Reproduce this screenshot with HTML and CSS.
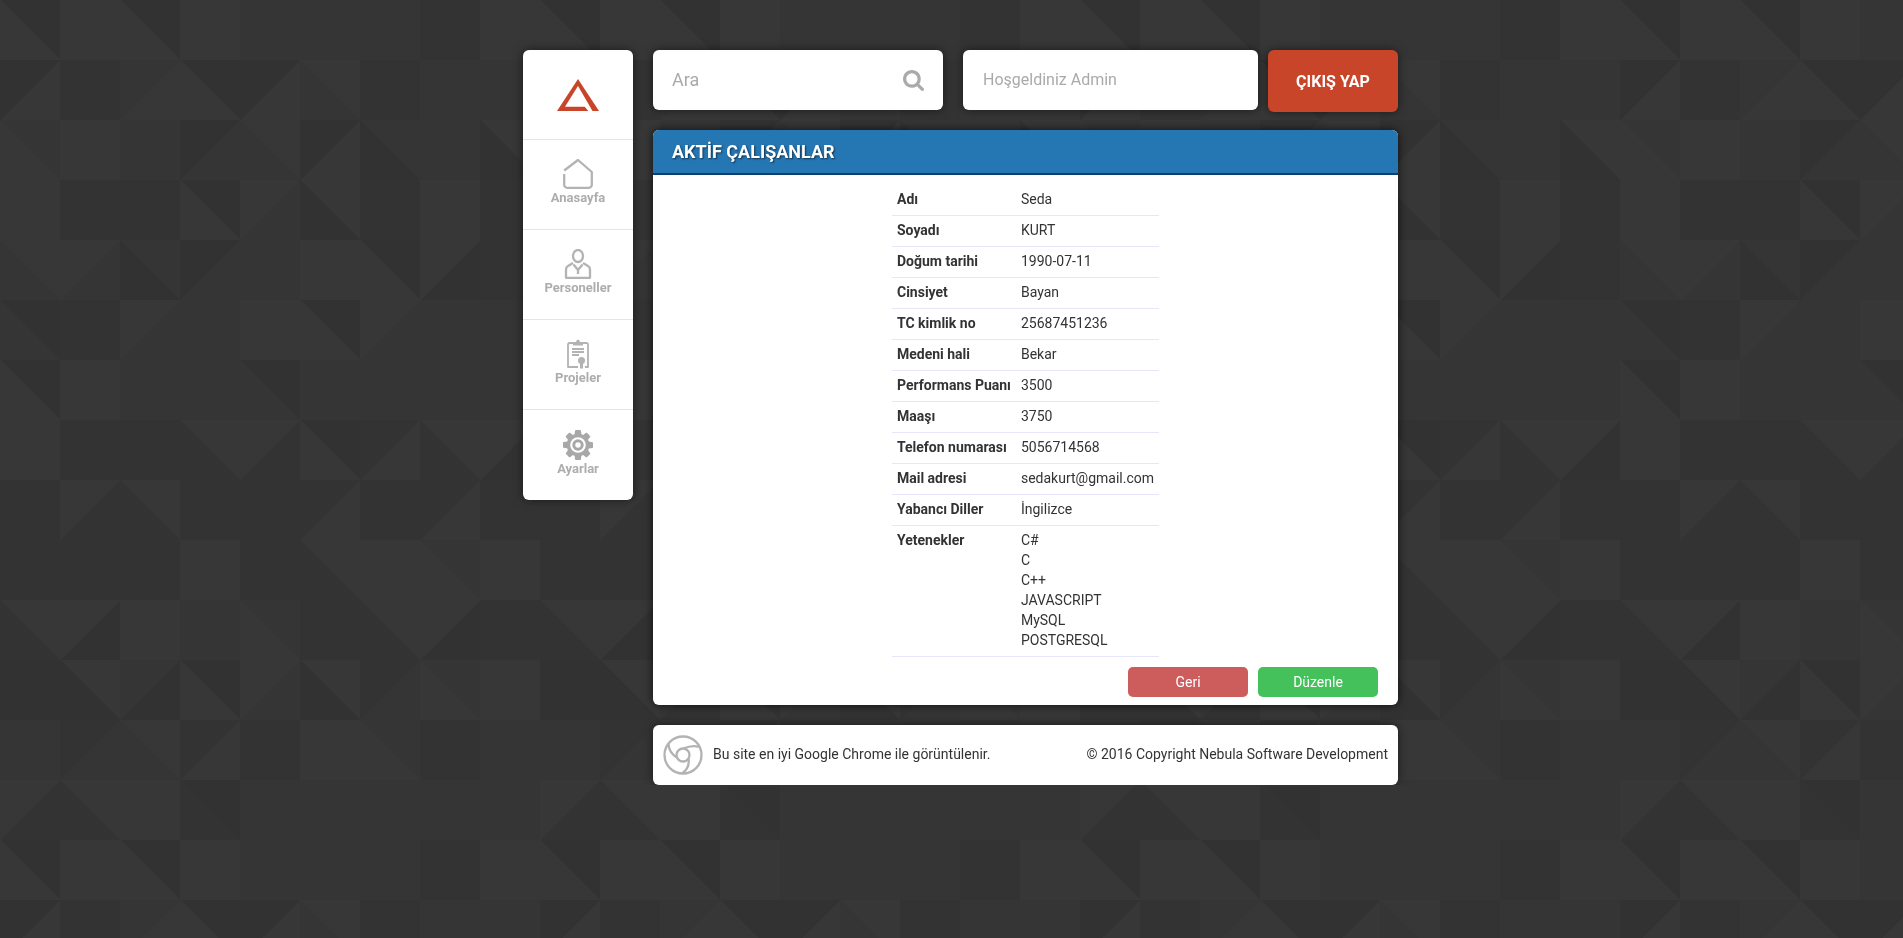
FILE: index.html
```html
<!DOCTYPE html>
<html lang="en">
<head>
    <meta charset="UTF-8">
    <meta name="viewport" content="width=device-width, initial-scale=1.0">
    <title>Aktif Çalışanlar</title>
    <link rel="stylesheet" href="styles.css">
</head>
<body>
    <!-- background triangles, 60px grid -->
    <svg class="bg-pattern" xmlns="http://www.w3.org/2000/svg">
        <defs>
            <pattern id="triangles" width="540" height="840" patternUnits="userSpaceOnUse">
                <g transform="scale(60)" shape-rendering="crispEdges">
                    <path fill="#333333" d="M7 0h1v1h-1zM1 1h1v1h-1zM6 1h1v1h-1zM1 3h2v1h-2zM6 3h1v1h-1zM8 3h1v2h-1zM1 5h1v1h-1zM1 7h2v1h-2zM0 8h1v2h-1zM3 8h2v1h-2zM6 8h1v1h-1zM8 8h1v1h-1zM1 9h2v1h-2zM4 9h1v1h-1zM5 10h1v1h-1zM8 10h1v1h-1zM4 12h1v1h-1zM7 12h1v1h-1zM3 7v1h1zM5 8v-1h-1v1zM6 7h1l-1 1zM7 7v1h1zM5 9v1h1zM0 10v1h1zM6 10v1h1zM6 11h1l-1 1zM1 12h1l-1 1zM3 12h1l-1 1zM1 13v1h1zM3 13v1h1zM1 14v-1h-1v1zM2 9v-1h-1v1zM2 8v1h1zM5 8h1l-1 1zM7 8h1l-1 1z"/>
                    <path fill="#323232" d="M0 0h1v1zM2 0h1v1zM0 1h1l-1 1zM3 1h1v1zM4 1h1l-1 1zM3 2h1l-1 1zM5 2h1l-1 1zM6 2v1h1zM8 2v1h1zM3 3h1v1zM5 3v1h1zM2 4v1h1zM3 4h1l-1 1zM8 4v1h-1zM6 4h1v1zM5 5h1v1zM1 6v-1h-1zM0 6h1v1zM4 6h1v1zM5 7h1v1zM9 7v1h-1zM2 10v1h-1zM8 10v1h-1zM0 11h1v1h-1zM1 11v1h1zM3 11v1h-1zM3 11h1v1zM5 11v1h1zM3 13h1v1z"/>
                    <path fill="#373737" d="M0 0v1h1zM1 0h1v1h-1zM2 0v1h1zM3 0h1v1h-1zM8 0h1v1h-1zM1 1v1h-1zM3 1v1h-1zM3 1v1h1zM5 1v1h-1zM5 1h1v1zM0 2v1h1zM1 2h1v1h-1zM4 2h1v1zM6 2v1h-1zM8 2h1v1zM3 3v1h1zM4 3h1l-1 1zM5 3h1v1zM7 3h1v1h-1zM0 3h1v1h-1zM0 4h1v1zM1 4h1l-1 1zM5 4h1v1h-1zM6 4v1h1zM7 4h1l-1 1zM2 5h1l-1 1zM4 5h1v1h-1zM5 5v1h1zM6 5h1l-1 1zM0 6v1h1zM1 6h1v1h-1zM3 7h1v1zM4 7h1l-1 1zM5 7v1h1zM7 7v1h-1zM7 7h1v1zM8 7h1l-1 1zM0 7h1v1h-1zM1 8h1l-1 1zM2 8h1v1zM6 8v1h-1zM8 8v1h-1zM3 9h1v1h-1zM5 9h1v1zM6 9h1v1h-1zM7 9v1h1zM8 9h1v1h-1zM0 10h1v1zM1 10h1l-1 1zM2 10h1v1h-1zM4 10v1h1zM6 10h1v1zM7 10h1l-1 1zM1 11h1v1zM3 11v1h1zM4 11h1l-1 1zM5 11h1v1zM7 11v1h1zM8 11h1v1h-1zM2 12h1v1zM4 12v1h-1zM5 12h1v1h-1zM6 12v1h1zM0 13h1l-1 1zM1 13h1v1zM2 13h1v1h-1z"/>
                </g>
            </pattern>
        </defs>
        <rect width="100%" height="100%" fill="url(#triangles)"/>
    </svg>

    <div class="page">
        <nav class="sidebar">
            <a class="nav-item logo" href="#">
                <svg width="42" height="32" viewBox="0 0 42 32"><path fill="#c9452a" d="M21 0L42 32H35.500L21 7L8 27.700H27.700L31.300 32H0Z"/></svg>
            </a>
            <a class="nav-item" href="#">
                <svg class="nav-icon" width="30" height="30" viewBox="0 0 30 30"><path d="M1.200 11.500L15 1L28.800 13V25.500A3 3 0 0 1 25.800 28.800H4.200A3 3 0 0 1 1.200 25.500V15"/></svg>
                <span>Anasayfa</span>
            </a>
            <a class="nav-item" href="#">
                <svg class="nav-icon" width="30" height="30" viewBox="0 0 30 30"><ellipse cx="15" cy="7" rx="5" ry="6"/><path d="M10 14L5 17Q3 18 3 20.500V28.800H27V20.500Q27 18 25 17L20 14M10.500 15.500L15 21L19.500 15.500M15 21V25"/></svg>
                <span>Personeller</span>
            </a>
            <a class="nav-item" href="#">
                <svg class="nav-icon clip" width="30" height="30" viewBox="0 0 30 30">
                    <path d="M10 4H6.500A1.500 1.500 0 0 0 5 5.500V28H15M20 4H23.500A1.500 1.500 0 0 1 25 5.500V28H22"/>
                    <path class="solid" d="M10 3H13Q13.500 0.500 15 0.500T17 3H20V6.500H10Z"/>
                    <path d="M9 10H21M9 13H21M9 16H16"/>
                    <circle class="solid" cx="18.500" cy="21.500" r="3.500"/>
                    <path class="solid" d="M17 24H20V29.500H17Z"/>
                </svg>
                <span>Projeler</span>
            </a>
            <a class="nav-item" href="#">
                <svg class="gear" width="30" height="30" viewBox="128 128 1536 1536">
                    <path d="M1152 896q0-106-75-181t-181-75-181 75-75 181 75 181 181 75 181-75 75-181zm512-109v222q0 12-8 23t-20 13l-185 28q-19 54-39 91 35 50 107 138 10 12 10 25t-9 23q-27 37-99 108t-94 71q-12 0-26-9l-138-108q-44 23-91 38-16 136-29 186-7 28-36 28h-222q-14 0-24.500-8.500t-11.500-21.500l-28-184q-49-16-90-37l-141 107q-10 9-25 9-14 0-25-11-126-114-165-168-7-10-7-23 0-12 8-23 15-21 51-66.500t54-70.500q-27-50-41-99l-183-27q-13-2-21-12.500t-8-23.500v-222q0-12 8-23t19-13l186-28q14-46 39-92-40-57-107-138-10-12-10-24 0-10 9-23 26-36 98.500-107.500t94.500-71.500q13 0 26 10l138 107q44-23 91-38 16-136 29-186 7-28 36-28h222q14 0 24.500 8.500t11.500 21.500l28 184q49 16 90 37l142-107q9-9 24-9 13 0 25 10 129 119 165 170 7 8 7 22 0 12-8 23-15 21-51 66.500t-54 70.500q26 50 41 98l183 28q13 2 21 12.500t8 23.500z"/>
                    <circle class="gear-gap" cx="896" cy="896" r="400"/>
                    <circle cx="896" cy="896" r="290"/>
                    <circle class="gear-gap" cx="896" cy="896" r="140"/>
                </svg>
                <span>Ayarlar</span>
            </a>
        </nav>

        <main class="main">
            <div class="topbar">
                <form class="search">
                    <input type="text" placeholder="Ara">
                    <svg width="21" height="21" viewBox="0 0 1664 1664"><path fill="#aaa" d="M1152 704q0-185-131.500-316.500t-316.500-131.500-316.500 131.500-131.500 316.500 131.500 316.500 316.500 131.500 316.500-131.500 131.500-316.500zm512 832q0 52-38 90t-90 38q-54 0-90-38l-343-342q-179 124-399 124-143 0-273.500-55.500t-225-150-150-225-55.500-273.500 55.500-273.500 150-225 225-150 273.500-55.500 273.500 55.500 225 150 150 225 55.500 273.500q0 220-124 399l343 343q37 37 37 90z"/></svg>
                </form>
                <div class="welcome">Hoşgeldiniz Admin</div>
                <button class="logout" type="button">ÇIKIŞ YAP</button>
            </div>

            <section class="panel">
                <h1 class="panel-title">AKTİF ÇALIŞANLAR</h1>
                <div class="panel-body">
                    <table class="details">
                        <tr><th>Adı</th><td>Seda</td></tr>
                        <tr><th>Soyadı</th><td>KURT</td></tr>
                        <tr><th>Doğum tarihi</th><td>1990-07-11</td></tr>
                        <tr><th>Cinsiyet</th><td>Bayan</td></tr>
                        <tr><th>TC kimlik no</th><td>25687451236</td></tr>
                        <tr><th>Medeni hali</th><td>Bekar</td></tr>
                        <tr><th>Performans Puanı</th><td>3500</td></tr>
                        <tr><th>Maaşı</th><td>3750</td></tr>
                        <tr><th>Telefon numarası</th><td>5056714568</td></tr>
                        <tr><th>Mail adresi</th><td>sedakurt@gmail.com</td></tr>
                        <tr><th>Yabancı Diller</th><td>İngilizce</td></tr>
                        <tr><th>Yetenekler</th><td>C#<br>C<br>C++<br>JAVASCRIPT<br>MySQL<br>POSTGRESQL</td></tr>
                    </table>
                    <div class="actions">
                        <button class="btn btn-back" type="button">Geri</button>
                        <button class="btn btn-edit" type="button">Düzenle</button>
                    </div>
                </div>
            </section>

            <footer class="footer">
                <div class="footer-left">
                    <svg class="chrome" width="40" height="40" viewBox="0 0 40 40">
                        <circle cx="20" cy="20" r="18.500"/>
                        <circle cx="20" cy="20" r="6.500"/>
                        <path d="M20 13.500Q30 9.500 36 12M25.500 23.500Q27 33 19 38.500M14.500 23Q6 18 5.500 9"/>
                    </svg>
                    <span>Bu site en iyi Google Chrome ile görüntülenir.</span>
                </div>
                <span>© 2016 Copyright Nebula Software Development</span>
            </footer>
        </main>
    </div>
</body>
</html>
```

FILE: styles.css
```css
* {
    box-sizing: border-box;
}
body {
    font-family: Roboto, Arial, sans-serif;
    font-size: 14px;
    line-height: 20px;
    color: #333;
    margin: 0;
    padding: 50px 0 0 18px;
    background-color: #353535;
}
.bg-pattern {
    position: fixed;
    top: 0;
    left: 0;
    width: 100%;
    height: 100%;
    z-index: -1;
}
.page {
    display: flex;
    align-items: flex-start;
    gap: 20px;
    width: 875px;
    margin: 0 auto;
}
.sidebar {
    flex: none;
    width: 110px;
    background: #fff;
    border-radius: 6px;
    box-shadow: 0 0 10px rgba(0, 0, 0, 0.5);
    overflow: hidden;
}
.nav-item {
    display: flex;
    flex-direction: column;
    align-items: center;
    justify-content: center;
    height: 90px;
    padding-bottom: 4px;
    border-bottom: 1px solid #e5e5e5;
    color: #adadad;
    font-size: 13px;
    font-weight: 700;
    line-height: 16px;
    text-decoration: none;
}
.nav-item span {
    margin-top: 1px;
}
.nav-item:last-child {
    border-bottom: none;
}
.logo {
    padding: 0;
}
.nav-icon {
    fill: none;
    stroke: #b3b3b3;
    stroke-width: 2.300;
    stroke-linejoin: round;
}
.nav-icon .solid {
    fill: #b3b3b3;
    stroke: none;
}
.clip {
    stroke-width: 1.800;
}
.gear {
    fill: #a8a8a8;
}
.gear-gap {
    fill: #fff;
}
.main {
    flex: none;
    width: 745px;
}
.topbar {
    display: flex;
    align-items: flex-start;
    margin-bottom: 18px;
}
.search {
    display: flex;
    align-items: center;
    width: 290px;
    height: 60px;
    margin: 0 20px 0 0;
    padding: 0 19px;
    background: #fff;
    border-radius: 6px;
    box-shadow: 0 0 10px rgba(0, 0, 0, 0.5);
}
.search input {
    flex: 1;
    min-width: 0;
    margin-top: -2px;
    border: none;
    outline: none;
    padding: 0;
    font-family: inherit;
    font-size: 18px;
}
.search input::placeholder {
    color: #aaa;
    opacity: 1;
}
.welcome {
    width: 295px;
    height: 60px;
    margin-right: 10px;
    padding-left: 20px;
    background: #fff;
    border-radius: 6px;
    box-shadow: 0 0 10px rgba(0, 0, 0, 0.5);
    color: #aaa;
    font-size: 16px;
    line-height: 60px;
}
.logout {
    width: 130px;
    height: 62px;
    border: none;
    border-radius: 6px;
    background-color: #c9452a;
    box-shadow: 0 0 10px rgba(0, 0, 0, 0.5);
    color: #fff;
    font-family: inherit;
    font-size: 16px;
    font-weight: 700;
    cursor: pointer;
}
.panel {
    background: #fff;
    border-radius: 6px;
    box-shadow: 0 0 10px rgba(0, 0, 0, 0.7);
    overflow: hidden;
}
.panel-title {
    height: 45px;
    margin: 0;
    padding-left: 19px;
    background-color: #2577b4;
    border-bottom: 2px solid #0f3f6d;
    color: #fff;
    font-size: 18px;
    font-weight: 700;
    line-height: 43px;
    text-shadow: 1px 1px 2px rgba(0, 0, 0, 0.6);
}
.panel-body {
    padding: 10px 20px 8px;
}
.details {
    border-collapse: collapse;
    margin: 0 auto;
}
.details th, .details td {
    padding: 4px 5px 6px;
    border-bottom: 1px solid #e6e6fa;
    text-align: left;
    vertical-align: top;
}
.details th {
    font-weight: 700;
}
.actions {
    display: flex;
    justify-content: flex-end;
    gap: 10px;
    margin-top: 10px;
}
.btn {
    width: 120px;
    height: 30px;
    border: none;
    border-radius: 5px;
    color: #fff;
    font-family: inherit;
    font-size: 14px;
    cursor: pointer;
}
.btn-back {
    background-color: #cd5c5c;
}
.btn-edit {
    background-color: #44c15a;
}
.footer {
    display: flex;
    align-items: center;
    justify-content: space-between;
    height: 60px;
    margin-top: 20px;
    padding: 0 10px;
    background: #fff;
    border-radius: 6px;
    box-shadow: 0 0 10px rgba(0, 0, 0, 0.5);
}
.footer-left {
    display: flex;
    align-items: center;
    gap: 10px;
}
.footer span {
    margin-top: -2px;
}
.chrome {
    fill: none;
    stroke: #b3b3b3;
    stroke-width: 2.300;
}
```
